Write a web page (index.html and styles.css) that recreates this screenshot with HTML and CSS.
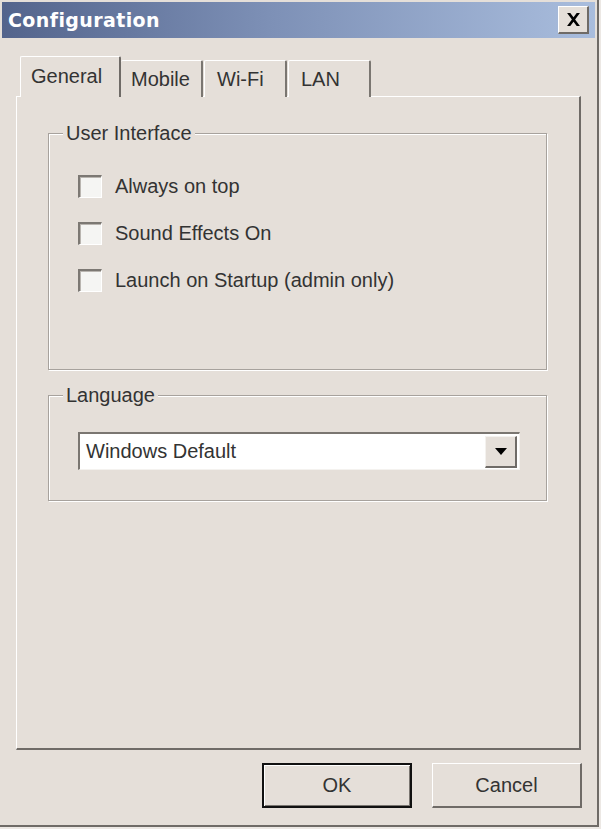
FILE: index.html
```html
<!DOCTYPE html>
<html>
<head>
<meta charset="utf-8">
<link rel="stylesheet" href="styles.css">
</head>
<body>
<div class="window">
  <div class="titlebar">
    <span class="title">Configuration</span>
    <div class="close">
      <svg width="15" height="13" viewBox="0 0 14 12"><path d="M1 0h3l3 4 3-4h3l-4.5 6 4.5 6h-3l-3-4-3 4h-3l4.5-6z" fill="#000"/></svg>
    </div>
  </div>
  <div class="content">
    <div class="tabs">
      <div class="tab active">General</div>
      <div class="tab t-mobile">Mobile</div>
      <div class="tab t-wifi">Wi-Fi</div>
      <div class="tab t-lan">LAN</div>
    </div>
    <div class="panel">
      <fieldset class="group group-ui">
        <legend>User Interface</legend>
        <label class="check"><span class="box"></span>Always on top</label>
        <label class="check"><span class="box"></span>Sound Effects On</label>
        <label class="check"><span class="box"></span>Launch on Startup (admin only)</label>
      </fieldset>
      <fieldset class="group group-lang">
        <legend>Language</legend>
        <div class="combo">
          <span class="combo-text">Windows Default</span>
          <span class="combo-btn"><svg width="12" height="7" viewBox="0 0 12 7"><path d="M0 0h12L6 7z" fill="#000"/></svg></span>
        </div>
      </fieldset>
    </div>
    <div class="buttons">
      <div class="btn btn-default">OK</div>
      <div class="btn">Cancel</div>
    </div>
  </div>
</div>
</body>
</html>
```
FILE: styles.css
```css
html, body {
  margin: 0;
  padding: 0;
  background: #e5dfd9;
}
body {
  font-family: "Liberation Sans", Arial, sans-serif;
  font-size: 20px;
  color: #333;
}
.window {
  width: 601px;
  height: 829px;
  box-sizing: border-box;
  padding: 2px 0 0 2px;
  border-right: 2px solid #ece8e4;
  border-bottom: 2px solid #ece8e4;
  box-shadow: inset -2px -2px 0 #6f6b67;
  background: #e5dfd9;
}
.titlebar {
  height: 36px;
  margin-right: 4px;
  display: flex;
  align-items: center;
  justify-content: space-between;
  background: linear-gradient(to right, #53648c 0%, #7d90b6 45%, #a9bddd 100%);
}
.title {
  font-family: "DejaVu Sans", sans-serif;
  font-weight: bold;
  font-size: 19px;
  color: #fff;
  padding-left: 6px;
  letter-spacing: 0.4px;
}
.close {
  width: 31px;
  height: 28px;
  box-sizing: border-box;
  margin-right: 6px;
  background: #e5dfd9;
  border-top: 1px solid #fff;
  border-left: 1px solid #fff;
  border-right: 2px solid #6f6b67;
  border-bottom: 2px solid #6f6b67;
  display: flex;
  align-items: center;
  justify-content: center;
}
.content {
  padding: 19px 0 0 14px;
}
.tabs {
  display: flex;
  align-items: flex-end;
  padding-left: 4px;
  height: 40px;
  margin-bottom: -1px;
  position: relative;
  z-index: 1;
}
.tab {
  height: 37px;
  box-sizing: border-box;
  padding-left: 10px;
  display: flex;
  align-items: center;
  background: #e5dfd9;
  border-top: 1px solid #fff;
  border-left: 1px solid #fff;
  border-right: 2px solid #7a7671;
  border-top-left-radius: 2px;
  border-top-right-radius: 2px;
  color: #333;
}
.tab.active {
  width: 101px;
  height: 41px;
  padding-left: 10px;
  padding-bottom: 2px;
  border-right-color: #6f6b67;
}
.t-mobile { width: 82px; padding-left: 10px; border-left: none; }
.t-wifi { width: 83px; padding-left: 12px; margin-left: 1px; }
.t-lan { width: 83px; padding-left: 12px; margin-left: 1px; }
.panel {
  width: 565px;
  height: 654px;
  box-sizing: border-box;
  border-top: 1px solid #fff;
  border-left: 1px solid #fff;
  border-right: 2px solid #6f6b67;
  border-bottom: 2px solid #6f6b67;
  padding: 25px 0 0 31px;
  display: flex;
  flex-direction: column;
}
.group {
  width: 499px;
  box-sizing: border-box;
  margin: 0;
  padding: 0 0 0 29px;
  border: 1px solid #a7a29d;
  box-shadow: inset 1px 1px 0 #fff, 1px 1px 0 #fff;
}
.group legend {
  padding: 0 3px;
  margin-left: -15px;
  color: #333;
  background: #e5dfd9;
  line-height: 22px;
}
.group-ui {
  height: 248px;
  padding-top: 30px;
  display: flex;
  flex-direction: column;
  gap: 22px;
}
.group-lang {
  height: 117px;
  margin-top: 14px;
  padding-top: 26px;
}
.check {
  display: flex;
  align-items: center;
  gap: 13px;
  height: 24px;
  color: #333;
}
.check + .check {
  margin-top: 1px;
}
.box {
  width: 24px;
  height: 23px;
  box-sizing: border-box;
  background: #f5f5f3;
  border-top: 2px solid #7c7873;
  border-left: 2px solid #7c7873;
  border-right: 1px solid #fff;
  border-bottom: 1px solid #fff;
  box-shadow: inset 1px 1px 0 #b9b5b0;
}
.combo {
  width: 442px;
  height: 38px;
  box-sizing: border-box;
  background: #fff;
  border-top: 2px solid #7a7671;
  border-left: 2px solid #7a7671;
  border-right: 1px solid #f4f2ef;
  border-bottom: 1px solid #f4f2ef;
  display: flex;
  align-items: center;
  justify-content: space-between;
  padding: 1px 2px 1px 6px;
}
.combo-text {
  color: #333;
}
.combo-btn {
  width: 32px;
  height: 32px;
  box-sizing: border-box;
  background: #e5dfd9;
  border-top: 1px solid #f4f2ef;
  border-left: 1px solid #f4f2ef;
  border-right: 2px solid #6f6b67;
  border-bottom: 2px solid #6f6b67;
  display: flex;
  align-items: center;
  justify-content: center;
}
.buttons {
  width: 566px;
  display: flex;
  justify-content: flex-end;
  gap: 20px;
  margin-top: 13px;
}
.btn {
  width: 150px;
  height: 45px;
  box-sizing: border-box;
  display: flex;
  align-items: center;
  justify-content: center;
  background: #e5dfd9;
  border-top: 1px solid #fff;
  border-left: 1px solid #fff;
  border-right: 2px solid #6f6b67;
  border-bottom: 2px solid #6f6b67;
  color: #333;
}
.btn-default {
  border: 2px solid #111;
  box-shadow: inset 1px 1px 0 #fff, inset -1px -1px 0 #7a7671;
}
```
